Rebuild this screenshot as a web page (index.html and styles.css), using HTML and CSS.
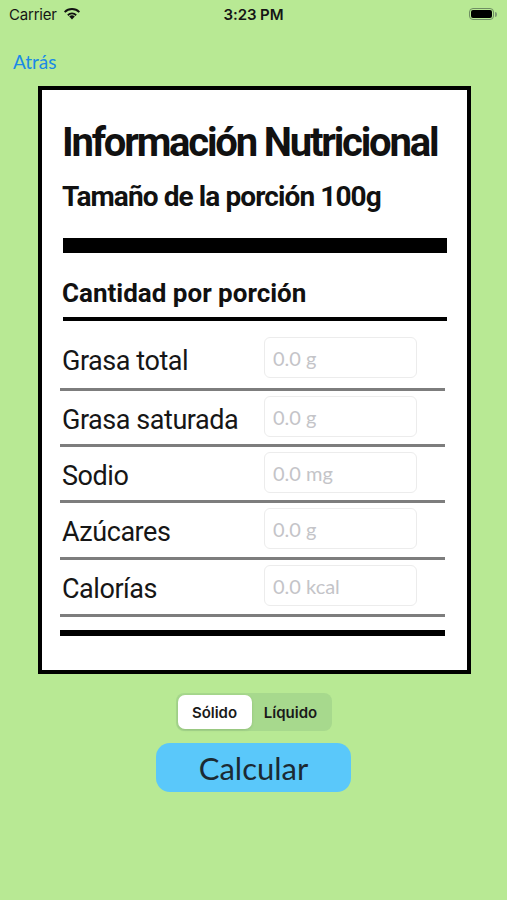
FILE: index.html
```html
<!DOCTYPE html>
<html lang="es">
<head>
<meta charset="utf-8">
<title>Información Nutricional</title>
<link rel="stylesheet" href="styles.css">
</head>
<body>
<div class="screen">
  <header class="status">
    <div class="status-left">
      <span class="carrier">Carrier</span>
      <svg class="wifi" width="18" height="13" viewBox="0 0 18 13" aria-hidden="true">
        <path d="M9 12.6 L6.2 9.6 A4 4 0 0 1 11.8 9.6 Z" fill="#111"/>
        <path d="M4.2 7.6 A6.8 6.8 0 0 1 13.8 7.6 L12.6 8.9 A5 5 0 0 0 5.4 8.9 Z" fill="#111"/>
        <path d="M1 4.4 A11.3 11.3 0 0 1 17 4.4 L15.7 5.8 A9.4 9.4 0 0 0 2.3 5.8 Z" fill="#111"/>
      </svg>
    </div>
    <div class="time">3:23 PM</div>
    <div class="status-right">
      <span class="battery"><span class="battery-fill"></span></span><span class="battery-cap"></span>
    </div>
  </header>

  <nav class="nav">
    <a class="back">Atrás</a>
  </nav>

  <section class="label">
    <h1 class="label-title">Información Nutricional</h1>
    <p class="label-serving">Tamaño de la porción 100g</p>
    <div class="bar-thick"></div>
    <p class="label-amount">Cantidad por porción</p>
    <div class="bar-mid"></div>

    <div class="row row-first">
      <span class="row-name">Grasa total</span>
      <input class="row-input" type="text" placeholder="0.0 g">
    </div>
    <div class="row row-tight">
      <span class="row-name">Grasa saturada</span>
      <input class="row-input" type="text" placeholder="0.0 g">
    </div>
    <div class="row row-tight">
      <span class="row-name">Sodio</span>
      <input class="row-input" type="text" placeholder="0.0 mg">
    </div>
    <div class="row">
      <span class="row-name">Azúcares</span>
      <input class="row-input" type="text" placeholder="0.0 g">
    </div>
    <div class="row">
      <span class="row-name">Calorías</span>
      <input class="row-input" type="text" placeholder="0.0 kcal">
    </div>
    <div class="bar-end"></div>
  </section>

  <div class="segmented">
    <span class="seg seg-active">Sólido</span>
    <span class="seg">Líquido</span>
  </div>

  <div class="actions">
    <button class="calc" type="button">Calcular</button>
  </div>
</div>
</body>
</html>
```

FILE: styles.css
```css
* { box-sizing: border-box; }

html, body {
  margin: 0;
  padding: 0;
  background: #b8e994;
}

.screen {
  width: 507px;
  height: 900px;
  background: #b8e994;
  display: flex;
  flex-direction: column;
  font-family: "Lato", "Noto Sans", sans-serif;
}

/* status bar */
.status {
  height: 28px;
  display: grid;
  grid-template-columns: 1fr auto 1fr;
  align-items: center;
  padding: 0 9px;
  font-family: "Inter", "Liberation Sans", sans-serif;
  font-size: 15px;
  color: #151515;
}
.status-left {
  display: flex;
  align-items: center;
  gap: 6px;
}
.carrier { letter-spacing: -0.2px; }
.wifi { margin-top: -1px; }
.time {
  font-weight: 600;
  letter-spacing: -0.1px;
}
.status-right {
  display: flex;
  justify-content: flex-end;
  align-items: center;
  padding-right: 1px;
}
.battery {
  width: 25px;
  height: 12px;
  border: 1px solid #6f8f62;
  border-radius: 4px;
  padding: 1px;
  display: flex;
}
.battery-fill {
  flex: 1;
  background: #000;
  border-radius: 2px;
}
.battery-cap {
  width: 2px;
  height: 5px;
  background: #7e9c72;
  border-radius: 0 2px 2px 0;
  margin-left: 1px;
}

/* nav */
.nav {
  height: 58px;
  padding: 22px 13px 0;
}
.back {
  font-family: "Lato", sans-serif;
  font-size: 19px;
  color: #1a8ae6;
}

/* label card */
.label {
  margin-left: 38px;
  width: 433px;
  height: 588px;
  background: #fff;
  border: 4px solid #000;
  padding: 29px 20px 0 20px;
  display: flex;
  flex-direction: column;
  font-family: "Roboto", "Liberation Sans", sans-serif;
  color: #111;
}
.label-title {
  margin: 0;
  font-size: 40px;
  line-height: 48px;
  font-weight: 700;
  letter-spacing: -2.2px;
  white-space: nowrap;
}
.label-serving {
  margin: 13px 0 0;
  font-size: 28px;
  line-height: 34px;
  font-weight: 700;
  letter-spacing: -0.9px;
  white-space: nowrap;
}
.bar-thick {
  margin: 24px 0 0 1px;
  width: 384px;
  height: 15px;
  background: #000;
}
.label-amount {
  margin: 24px 0 0;
  font-size: 26px;
  line-height: 32px;
  font-weight: 700;
  letter-spacing: 0;
  white-space: nowrap;
}
.bar-mid {
  margin: 8px 0 0 1px;
  width: 384px;
  height: 4px;
  background: #000;
}

.row {
  display: flex;
  align-items: flex-start;
  width: 385px;
  margin-left: -2px;
  padding: 5px 0 8px 2px;
  border-bottom: 3px solid #7d7d7d;
}
.row-first { padding-top: 16px; padding-bottom: 10px; }
.row-tight { padding-top: 5px; padding-bottom: 7px; }
.row-name {
  width: 202px;
  height: 41px;
  padding-top: 8px;
  font-size: 27px;
  line-height: 33px;
  font-weight: 400;
  letter-spacing: -0.45px;
  color: #161616;
  white-space: nowrap;
}
.row-input {
  width: 153px;
  height: 41px;
  border: 1px solid #ececec;
  border-radius: 6px;
  padding: 0 8px;
  font-family: "Lato", sans-serif;
  font-size: 20px;
  color: #333;
  background: #fff;
  outline: none;
}
.row-input::placeholder { color: #c4c4c8; }

.bar-end {
  margin: 13px 0 0 -2px;
  width: 385px;
  height: 6px;
  background: #000;
}

/* segmented control */
.segmented {
  align-self: center;
  margin-top: 19px;
  width: 156px;
  height: 38px;
  padding: 2px;
  border-radius: 8px;
  background: #a7d98d;
  display: flex;
  font-family: "Inter", "Liberation Sans", sans-serif;
  font-size: 15px;
  font-weight: 600;
  color: #1a1a1a;
}
.seg {
  flex: 1;
  display: flex;
  align-items: center;
  justify-content: center;
  border-radius: 7px;
}
.seg-active {
  flex: 0 0 74px;
  background: #fff;
  box-shadow: 0 1px 3px rgba(0,0,0,0.12);
}

.actions {
  display: flex;
  justify-content: center;
  margin-top: 12px;
}
.calc {
  width: 195px;
  height: 49px;
  border: none;
  border-radius: 14px;
  background: #5ac8fa;
  font-family: "Lato", sans-serif;
  font-size: 31px;
  color: #1b2a33;
  padding: 0;
}
```
